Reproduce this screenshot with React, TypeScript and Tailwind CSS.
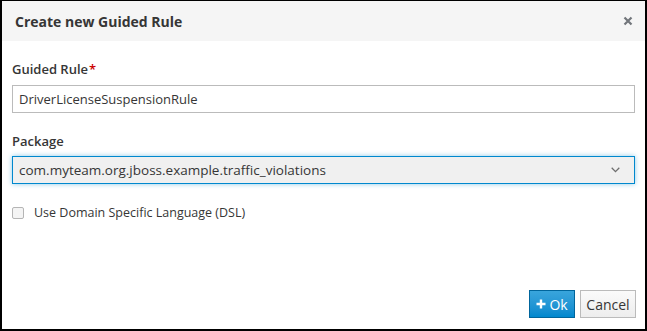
export default function App() {
  return (
    <div
      className="w-[647px] h-[331px] bg-white flex flex-col border-black border-t border-x-2 border-b-2 text-[#363636]"
      style={{ fontFamily: '"Open Sans", "Liberation Sans", sans-serif' }}
    >
      <div className="h-[40px] shrink-0 bg-[#f5f5f5] flex items-center justify-between pl-[13px] pr-[12px]">
        <h4 className="text-[14px] font-bold text-[#363636]">Create new Guided Rule</h4>
        <button className="text-[#72767b]" aria-label="Close">
          <svg width="10" height="10" viewBox="0 0 10 10">
            <path d="M1.5 1.5 L8.5 8.5 M8.5 1.5 L1.5 8.5" stroke="currentColor" strokeWidth="2.2" />
          </svg>
        </button>
      </div>

      <div className="flex flex-col px-[10px] pt-[19px]">
        <label className="text-[13px] font-semibold leading-[18px] mb-[7px]">
          Guided Rule<span className="text-[#cc0000] ml-[1px]">*</span>
        </label>
        <input
          className="h-[28px] w-full border border-[#bbbbbb] px-[6px] text-[13px] text-[#363636] outline-none"
          defaultValue="DriverLicenseSuspensionRule"
        />

        <label className="text-[13px] font-semibold leading-[18px] mt-[19px] mb-[6px]">Package</label>
        <div className="h-[28px] w-full border border-[#0088ce] bg-[#f0f0f0] shadow-[0_0_5px_rgba(0,136,206,0.45)] flex items-center justify-between pl-[6px] pr-[14px]">
          <span className="text-[13.5px]">com.myteam.org.jboss.example.traffic_violations</span>
          <svg width="9" height="6" viewBox="0 0 9 6" className="text-[#6f6f6f]">
            <path d="M0.7 0.8 L4.5 4.6 L8.3 0.8" fill="none" stroke="currentColor" strokeWidth="1.3" />
          </svg>
        </div>

        <label className="flex items-center h-[18px] mt-[20px] text-[12.5px]">
          <span className="w-[12px] h-[12px] rounded-[2px] border border-[#b5b5b5] bg-[#f4f4f4] mr-[10px]" />
          Use Domain Specific Language (DSL)
        </label>
      </div>

      <div className="mt-auto flex justify-end gap-[5px] pr-[9px] pb-[11px]">
        <button className="h-[28px] w-[46px] flex items-center justify-center gap-[3px] border border-[#00659c] bg-gradient-to-b from-[#39a5dc] to-[#0088ce] text-white text-[14px]">
          <svg width="10" height="10" viewBox="0 0 10 10">
            <path d="M5 0.5 V9.5 M0.5 5 H9.5" stroke="white" strokeWidth="2.4" />
          </svg>
          Ok
        </button>
        <button className="h-[28px] w-[56px] border border-[#bbbbbb] bg-gradient-to-b from-[#fafafa] to-[#ededed] text-[14px] text-[#363636]">
          Cancel
        </button>
      </div>
    </div>
  );
}
